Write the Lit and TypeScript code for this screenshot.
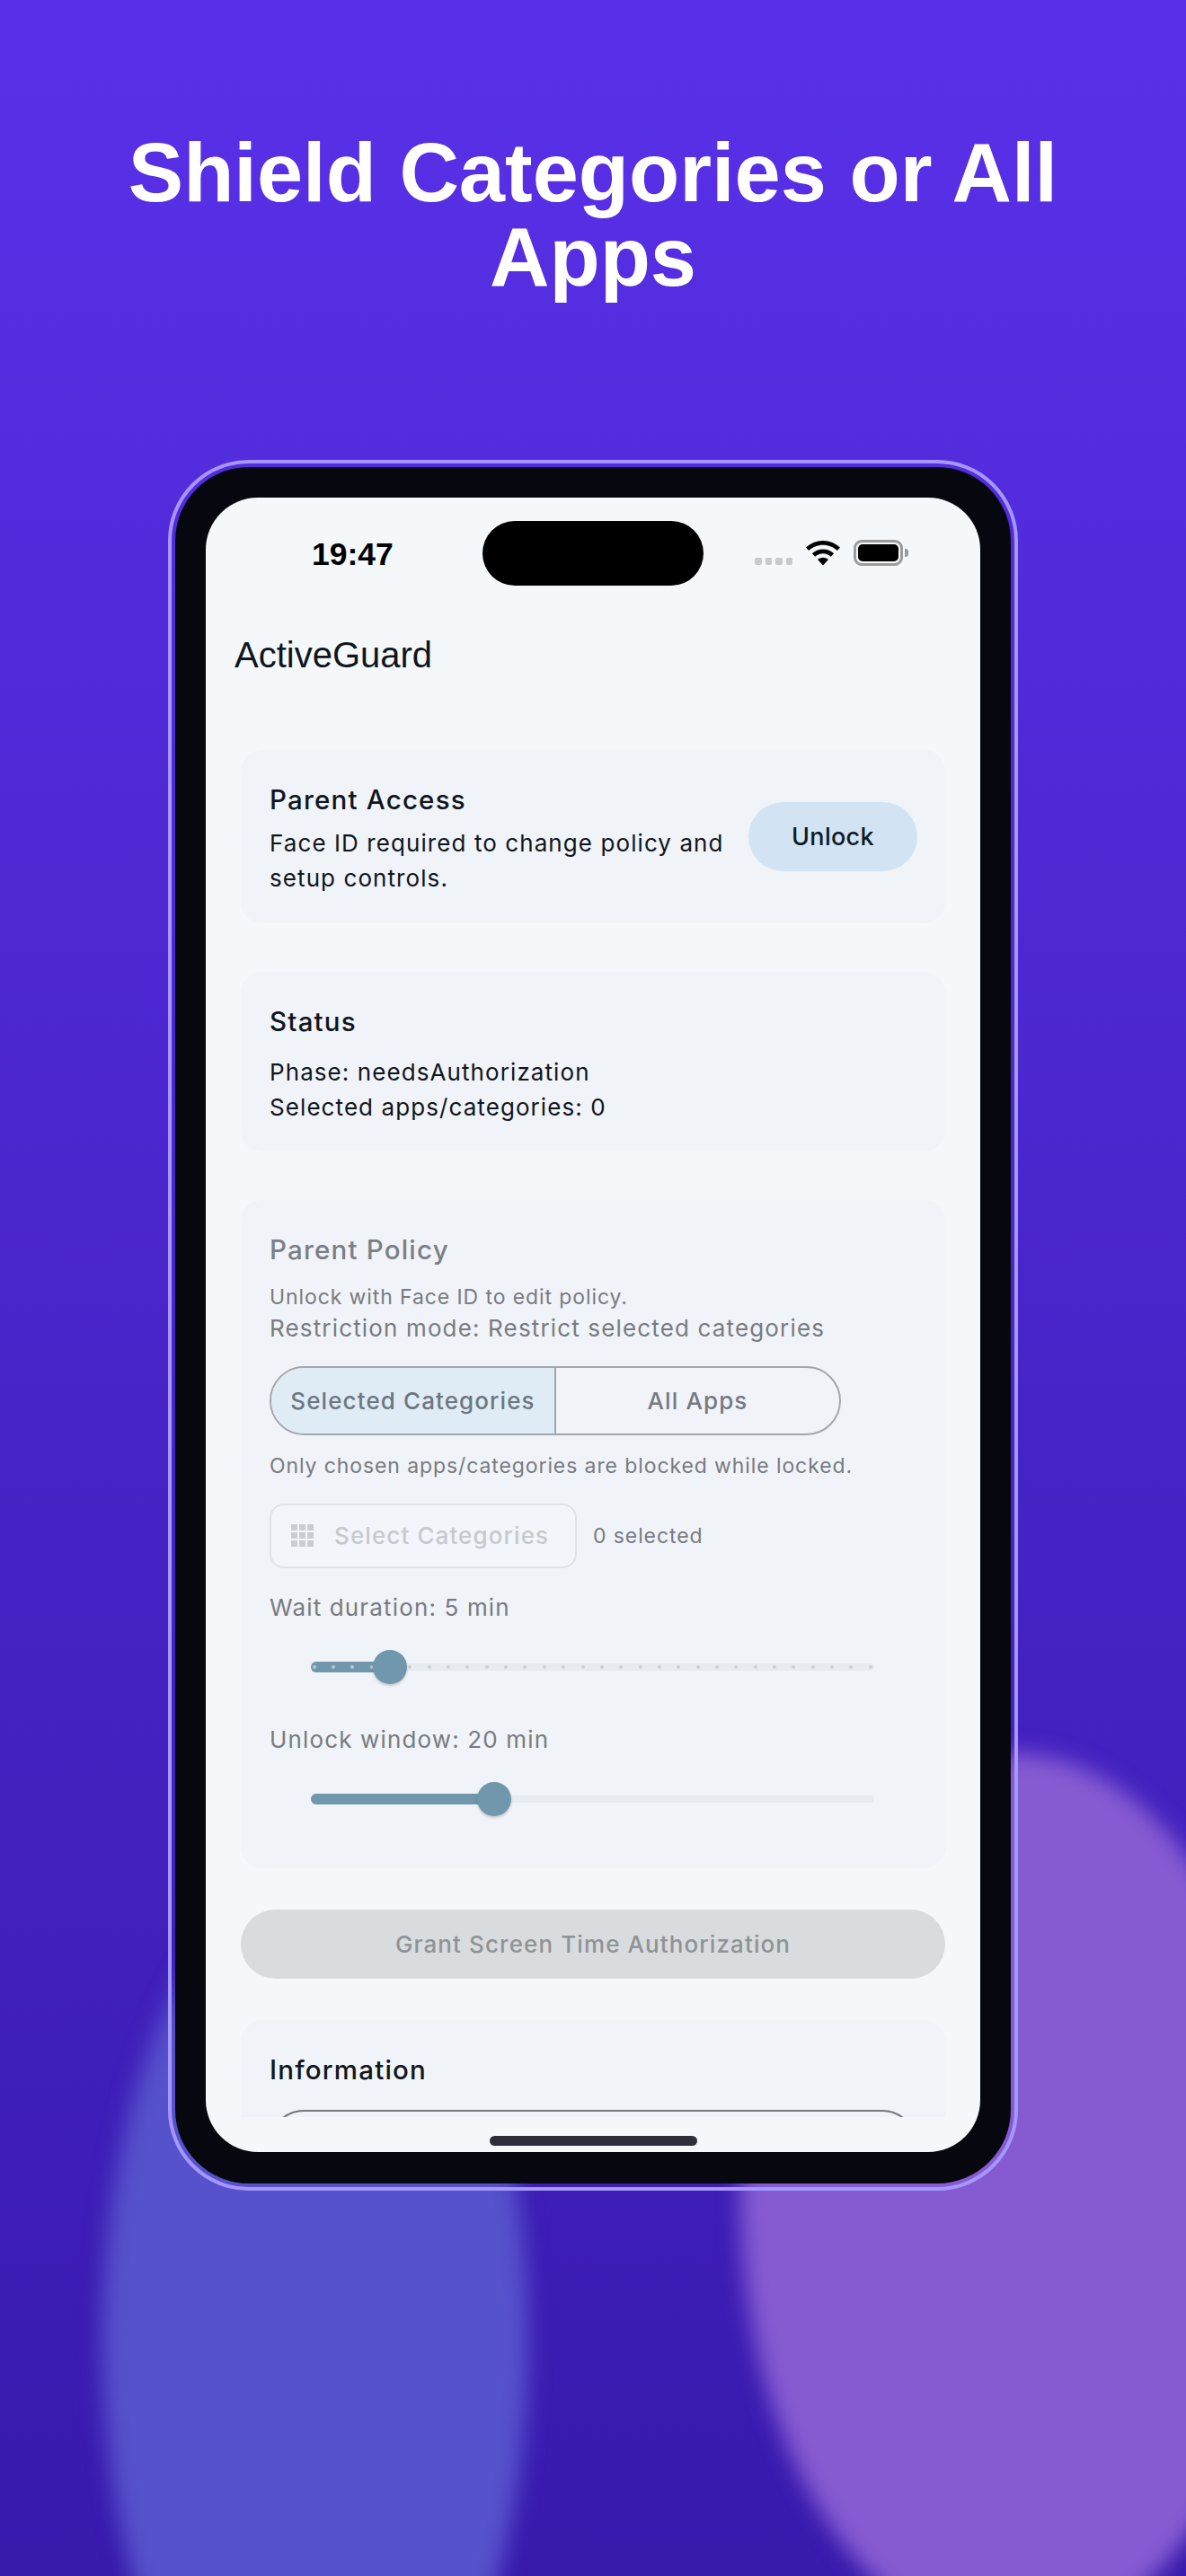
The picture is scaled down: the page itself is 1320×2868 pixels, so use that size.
import { LitElement, html, css, svg } from "lit";
import { customElement } from "lit/decorators.js";

const dots = Array.from({ length: 30 }, (_, i) => i);

@customElement("app-slider")
class AppSlider extends LitElement {
  static properties = { pct: { type: Number }, ticks: { type: Boolean } };
  pct = 0;
  ticks = false;
  static styles = css`
    :host { display: block; height: 40px; position: relative; }
    .track { position: absolute; left: 0; right: 0; top: 16px; height: 8px; border-radius: 4px; background: #e7ebf0; }
    .active { position: absolute; left: 0; top: 14px; height: 12px; border-radius: 6px; background: #7097ab; }
    .thumb { position: absolute; top: 1px; width: 38px; height: 38px; margin-left: -19px; border-radius: 50%; background: #7097ab; box-shadow: 0 2px 3px rgba(0,0,0,.18); }
    .dot { position: absolute; top: 18px; width: 4px; height: 4px; margin-left: -2px; border-radius: 50%; background: #cdd1d7; }
    .dot.on { background: #b5c8d3; }
  `;
  render() {
    const w = 626.5;
    const thumb = (this.pct / 100) * w;
    return html`
      <div class="track"></div>
      <div class="active" style="width:${thumb}px"></div>
      ${this.ticks
        ? dots.map((i) => {
            const x = 3.6 + i * 21.35;
            return html`<div class="dot ${x < thumb ? "on" : ""}" style="left:${x}px"></div>`;
          })
        : ""}
      <div class="thumb" style="left:${thumb}px"></div>
    `;
  }
}

const wifi = svg`<path d="M19 0C11.6 0 5 2.9 0 7.6l3.2 3.4C7.3 7.2 12.9 4.8 19 4.8s11.7 2.4 15.8 6.2L38 7.6C33 2.9 26.4 0 19 0zM19 9.4c-4.7 0-8.9 1.8-12.1 4.8l3.3 3.5c2.3-2.1 5.4-3.5 8.8-3.5s6.5 1.4 8.8 3.5l3.3-3.5c-3.2-3-7.4-4.8-12.1-4.8zM19 18.8c-2.3 0-4.4.9-5.9 2.3L19 27.5l5.9-6.4c-1.5-1.4-3.6-2.3-5.9-2.3z"/>`;

@customElement("app-root")
class AppRoot extends LitElement {
  static styles = css`
    :host { display: block; position: relative; width: 1320px; height: 2868px; overflow: hidden; background: linear-gradient(180deg, #5930e8 0%, #381aad 100%); font-family: Inter, "Liberation Sans", sans-serif; }
    .blob { position: absolute; border-radius: 50%; filter: blur(12px); }
    .blob.blue { left: 114px; top: 2090px; width: 474px; height: 1030px; background: #5652cb; }
    .blob.violet { left: 824px; top: 1952px; width: 606px; height: 988px; background: #865bd1; }
    .page { position: relative; display: flex; flex-direction: column; align-items: center; }
    h1 { margin: 0; padding-top: 145px; width: 1100px; height: 512px; box-sizing: border-box; text-align: center; color: #fff; font: 700 92px/94px "Liberation Sans", sans-serif; }
    .frame { box-sizing: border-box; width: 946px; height: 1927px; padding: 4px; border: 4px solid #a597ff; border-radius: 90px; }
    .bezel { box-sizing: border-box; height: 100%; padding: 34px 34px 35px; background: #07080f; border-radius: 82px; }
    .screen { height: 100%; background: #f4f8fb; border-radius: 58px; overflow: hidden; display: flex; flex-direction: column; }
    .status { flex: none; height: 98px; display: flex; align-items: flex-start; padding-top: 26px; box-sizing: border-box; }
    .time { width: 308px; box-sizing: border-box; padding: 17px 0 0 118px; font: 700 35.5px/40px "Liberation Sans", sans-serif; color: #000; }
    .island { width: 246px; height: 72px; border-radius: 36px; background: #000; flex: none; }
    .sys { display: flex; align-items: flex-start; margin-left: 57px; height: 72px; }
    .sig { display: flex; gap: 4px; margin-top: 41px; }
    .sig i { width: 7.5px; height: 7.5px; border-radius: 2px; background: #c7c9cb; }
    .wifi { width: 38px; height: 28px; margin: 22px 0 0 15px; fill: #000; }
    .batt { box-sizing: border-box; width: 55px; height: 29px; margin: 21px 0 0 15px; border: 3px solid #9b9b9b; border-radius: 9px; padding: 2px; }
    .batt b { display: block; height: 100%; background: #000; border-radius: 5px; }
    .cap { width: 4px; height: 9px; margin: 31px 0 0 2px; border-radius: 0 3px 3px 0; background: #9b9b9b; }
    .appbar { flex: none; font: 400 40px/46px "Liberation Sans", sans-serif; color: #10161d; padding: 54px 0 0 32px; height: 183px; box-sizing: border-box; }
    .content { flex: 1; min-height: 0; overflow: hidden; padding: 0 39px; display: flex; flex-direction: column; }
    .card { flex: none; background: #f0f3f8; border-radius: 24px; box-sizing: border-box; padding: 37px 32px 0; }
    .t { color: #10161d; font-weight: 450; font-size: 29.5px; line-height: 36px; letter-spacing: 1.2px; }
    .b { color: #10161d; font-size: 26px; line-height: 38.5px; letter-spacing: 1.08px; }
    .access { height: 193px; display: flex; justify-content: space-between; padding-right: 31px; }
    .access .b { margin-top: 12px; }
    .unlock { width: 188px; height: 77px; margin-top: 21px; border-radius: 39px; background: #d2e4f4; color: #0f1b25; font-size: 27px; font-weight: 450; letter-spacing: .3px; display: flex; align-items: center; justify-content: center; flex: none; }
    .access .info { width: 520px; }
    .statusc { height: 200px; margin-top: 54px; }
    .statusc .b { margin-top: 20px; }
    .policy { height: 744px; margin-top: 54px; color: #787b80; }
    .policy .t { color: #7a7f85; }
    .sm { font-size: 23px; line-height: 30px; letter-spacing: .9px; }
    .md { font-size: 26px; line-height: 36px; letter-spacing: 1.15px; }
    .hint { margin-top: 19.5px; }
    .mode { margin-top: 2px; }
    .seg { display: flex; width: 636px; height: 77px; box-sizing: border-box; border: 2px solid #a3a6ab; border-radius: 39px; overflow: hidden; margin-top: 24.5px; }
    .seg div { display: flex; align-items: center; justify-content: center; font-size: 26px; font-weight: 450; letter-spacing: 1.1px; }
    .seg .on { box-sizing: border-box; width: 317px; background: #dfecf5; color: #6d7780; border-right: 2px solid #a3a6ab; }
    .seg .off { flex: 1; color: #777a7e; }
    .note { margin-top: 19.3px; }
    .picker { display: flex; align-items: center; gap: 18px; margin-top: 26.4px; }
    .pick { width: 342px; height: 72px; box-sizing: border-box; border: 2px solid #dfe2e6; border-radius: 16px; background: #f2f5fa; display: flex; align-items: center; gap: 23px; padding-left: 22px; color: #c6c9cd; font-size: 26px; font-weight: 450; letter-spacing: 1.1px; }
    .grid { width: 25px; height: 25px; fill: #c9ccd0; flex: none; }
    .wait { margin-top: 26.5px; }
    .sl { margin: 27.8px 0 0 46px; width: 626.5px; }
    .lab { margin-top: 43px; }
    .grant { flex: none; height: 77px; margin-top: 46px; border-radius: 39px; background: #d8dcdf; color: #8f9396; font-size: 26px; font-weight: 450; letter-spacing: 1.1px; display: flex; align-items: center; justify-content: center; }
    .infoc { height: 200px; margin-top: 46px; }
    .box { height: 77px; border: 2px solid #74787d; border-radius: 38px; margin-top: 27px; }
    .homebar { flex: none; height: 39px; display: flex; justify-content: center; padding-top: 21px; box-sizing: border-box; }
    .homebar i { width: 231px; height: 11px; border-radius: 6px; background: #2f2f3c; }
  `;
  render() {
    return html`
      <div class="blob blue"></div>
      <div class="blob violet"></div>
      <div class="page">
        <h1>Shield Categories or All Apps</h1>
        <div class="frame"><div class="bezel"><div class="screen">
          <div class="status">
            <div class="time">19:47</div>
            <div class="island"></div>
            <div class="sys">
              <div class="sig"><i></i><i></i><i></i><i></i></div>
              <svg class="wifi" viewBox="0 0 38 28">${wifi}</svg>
              <div class="batt"><b></b></div>
              <div class="cap"></div>
            </div>
          </div>
          <div class="appbar">ActiveGuard</div>
          <div class="content">
            <div class="card access">
              <div class="info">
                <div class="t">Parent Access</div>
                <div class="b">Face ID required to change policy and setup controls.</div>
              </div>
              <div class="unlock">Unlock</div>
            </div>
            <div class="card statusc">
              <div class="t">Status</div>
              <div class="b">Phase: needsAuthorization<br />Selected apps/categories: 0</div>
            </div>
            <div class="card policy">
              <div class="t">Parent Policy</div>
              <div class="sm hint">Unlock with Face ID to edit policy.</div>
              <div class="md mode">Restriction mode: Restrict selected categories</div>
              <div class="seg"><div class="on">Selected Categories</div><div class="off">All Apps</div></div>
              <div class="sm note">Only chosen apps/categories are blocked while locked.</div>
              <div class="picker">
                <div class="pick">
                  <svg class="grid" viewBox="0 0 25 25">
                    ${[0, 9, 18].flatMap((y) => [0, 9, 18].map((x) => svg`<rect x=${x} y=${y} width="7" height="7" />`))}
                  </svg>
                  Select Categories
                </div>
                <div class="sm">0 selected</div>
              </div>
              <div class="md wait">Wait duration: 5 min</div>
              <app-slider class="sl" pct="14" ticks></app-slider>
              <div class="md lab">Unlock window: 20 min</div>
              <app-slider class="sl" pct="32.5"></app-slider>
            </div>
            <div class="grant">Grant Screen Time Authorization</div>
            <div class="card infoc">
              <div class="t">Information</div>
              <div class="box"></div>
            </div>
          </div>
          <div class="homebar"><i></i></div>
        </div></div></div>
      </div>
    `;
  }
}
